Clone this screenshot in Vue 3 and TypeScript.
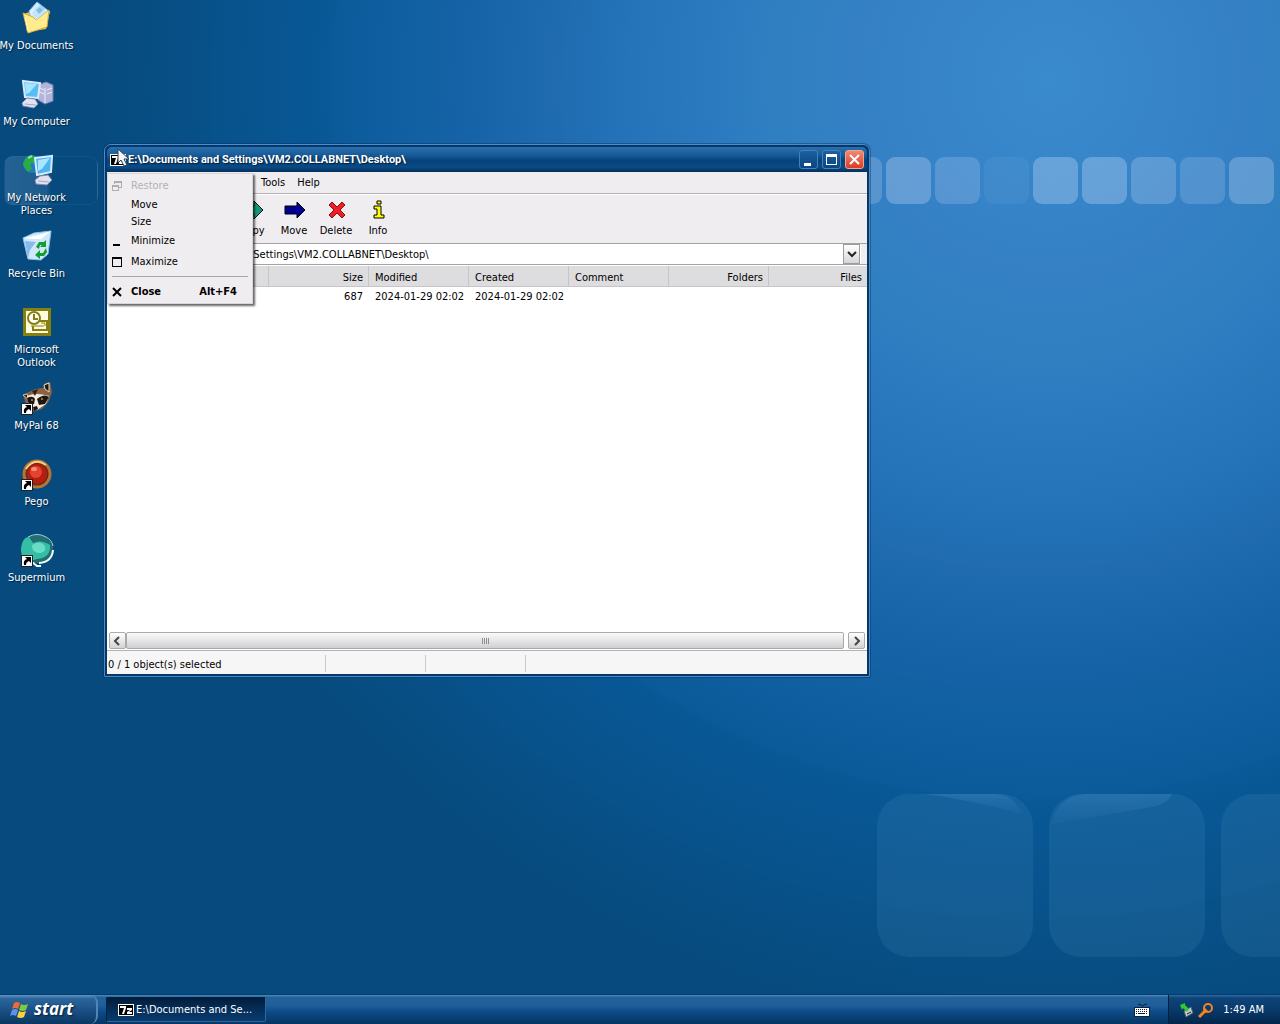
<script setup lang="ts">
import { ref } from 'vue'

interface Shortcut {
  id: string
  label: string
  linked?: boolean
}

interface FileRow {
  size: string
  modified: string
  created: string
}

interface SystemItem {
  label: string
  icon?: string
  disabled?: boolean
}

const shortcuts: Shortcut[] = [
  { id: 'documents', label: 'My Documents' },
  { id: 'computer', label: 'My Computer' },
  { id: 'network', label: 'My Network Places' },
  { id: 'recycle', label: 'Recycle Bin' },
  { id: 'outlook', label: 'Microsoft Outlook' },
  { id: 'mypal', label: 'MyPal 68', linked: true },
  { id: 'pego', label: 'Pego', linked: true },
  { id: 'supermium', label: 'Supermium', linked: true },
]

const path = 'E:\\Documents and Settings\\VM2.COLLABNET\\Desktop\\'
const address = ref(path)
const menus = ['Tools', 'Help']
const tools = ['Copy', 'Move', 'Delete', 'Info']
const rows: FileRow[] = [
  { size: '687', modified: '2024-01-29 02:02', created: '2024-01-29 02:02' },
]
const systemItems: SystemItem[] = [
  { label: 'Restore', icon: 'restore', disabled: true },
  { label: 'Move' },
  { label: 'Size' },
  { label: 'Minimize', icon: 'minimize' },
  { label: 'Maximize', icon: 'maximize' },
]
const smallTiles = [0.2, 0.27, 0.19, 0.06, 0.28, 0.28, 0.22, 0.17, 0.25]
const rings = [260, 350, 470, 590, 700, 820]
</script>

<template>
  <div class="screen">
    <svg class="wallpaper" viewBox="0 0 1280 1024" preserveAspectRatio="xMidYMid slice" aria-hidden="true">
      <defs>
        <radialGradient id="glow" gradientUnits="userSpaceOnUse" cx="1050" cy="80" r="1000">
          <stop offset="0" stop-color="#3a90ce" />
          <stop offset="0.2" stop-color="#3586c5" />
          <stop offset="0.42" stop-color="#2573b4" />
          <stop offset="0.58" stop-color="#1463a5" />
          <stop offset="0.74" stop-color="#075693" />
          <stop offset="0.95" stop-color="#074b7e" />
        </radialGradient>
        <linearGradient id="sheen" x1="0" y1="0" x2="0" y2="1">
          <stop offset="0" stop-color="#8fc0ff" stop-opacity="0.14" />
          <stop offset="1" stop-color="#8fc0ff" stop-opacity="0.03" />
        </linearGradient>
      </defs>
      <rect width="1280" height="1024" fill="url(#glow)" />
      <circle v-for="r in rings" :key="r" cx="1030" cy="100" :r="r" fill="#3b8fd8" fill-opacity="0.03" />
      <rect
        v-for="(opacity, i) in smallTiles"
        :key="i"
        :x="837 + i * 49"
        y="157"
        width="45"
        height="47"
        rx="9"
        fill="#e4ecff"
        :fill-opacity="opacity"
      />
      <rect
        v-for="i in 3"
        :key="'big' + i"
        :x="705 + i * 172"
        y="794"
        width="156"
        height="163"
        rx="32"
        fill="#6fb0d8"
        fill-opacity="0.12"
      />
      <path d="M925 794h70q18 0 27 20q-50-14-97-20z" fill="url(#sheen)" />
      <path d="M1051 824q8-30 36-30h85q-4 10-20 13z" fill="url(#sheen)" />
    </svg>

    <main class="desktop">
      <nav class="shortcuts" aria-label="Desktop">
        <a v-for="s in shortcuts" :key="s.id" href="#" class="shortcut" :class="{ hovered: s.id === 'network' }">
          <svg width="34" height="34" viewBox="0 0 34 34" aria-hidden="true">
            <g v-if="s.id === 'documents'">
              <path d="M4 13l8-3 3 3 15-3-4 18-19 3z" fill="#e8c64c" />
              <path d="M9 10L17 1l13 10-8 13-10-1z" fill="#d7efff" stroke="#83b6df" />
              <path d="M15 8l5-4 5 4-5 4zM15 15l4-3 5 4" fill="#8cc5ef" />
              <path d="M3 12l10 4 3 3 13-10-2 17-19 6z" fill="#ffec8e" stroke="#d7ac35" />
              <path d="M12 12l7-8 7 7-10 8z" fill="#c4e4fb" />
              <path d="M16 9l4-3 3 3-4 4z" fill="#7fbdec" />
              <path d="M5 16l3 14" stroke="#fffbd2" />
            </g>
            <g v-else-if="s.id === 'computer'">
              <path d="M18 8l8-3 7 3v16l-8 3-7-4z" fill="#b2b4da" stroke="#777caf" />
              <path d="M25 11v15M20 11l4 2M20 15l4 2M27 13l5-2M27 17l5-2" stroke="#eef" />
              <path d="M3 4l17 2-2 15-13-1z" fill="#58bdf5" stroke="#dceaff" stroke-width="2" />
              <path d="M5 6l12 1-8 9-3 1z" fill="#a5e6ff" />
              <path d="M7 21l8 1 3 5-4 4-11-2-1-3z" fill="#e2e2ef" stroke="#8188b2" />
              <path d="M5 27l11 1" stroke="#a4a7c7" />
            </g>
            <g v-else-if="s.id === 'network'">
              <circle cx="12" cy="11" r="9" fill="#237ac2" />
              <path d="M5 6l7-4 4 3-2 5-4 1 2 5-4 3-5-7z" fill="#29ac43" />
              <path d="M8 5l4-2" stroke="#8be491" stroke-width="2" />
              <path d="M15 5l17-2-1 16-14 3z" fill="#4bb5ef" stroke="#d9eaff" stroke-width="2" />
              <path d="M18 7l12-2-8 11-4 2z" fill="#a8e6ff" />
              <path d="M20 23l8-1 4 5-5 5-11-1-1-4z" fill="#e2e2ef" stroke="#8188b2" />
              <path d="M18 28l11 1" stroke="#a4a7c7" />
            </g>
            <g v-else-if="s.id === 'recycle'">
              <path d="M3 9l11-5 17-2-3 23-7 6-13-1z" fill="#cfe8fb" stroke="#8ebfe7" />
              <path d="M3 9l10 1 8 0 10-8-12 4z" fill="#fff" />
              <path d="M5 12l11 1-6 8-2 8z" fill="#86bbea" />
              <path d="M16 18l3-5h5l2-2v7h-6l2-2h-2l-1 4zM26 19l1 4-3 4h-4v3l-5-4 5-5v3h3z" fill="#11a02b" />
            </g>
            <g v-else-if="s.id === 'outlook'">
              <rect x="3" y="3" width="28" height="28" fill="#86800f" />
              <rect x="6" y="6" width="22" height="22" fill="#fffbe0" />
              <circle cx="14" cy="13" r="6" fill="#fff" stroke="#86800f" stroke-width="2" />
              <path d="M14 9v5h4M19 16h8v9H13v-4" fill="none" stroke="#86800f" stroke-width="2" />
              <path d="M11 21h13M21 18h4v3" stroke="#86800f" fill="none" />
            </g>
            <g v-else-if="s.id === 'mypal'">
              <path d="M3 14l6-3 6-3 8-1 2-5 5-1 2 10-3 9-7 8-10 3-6-8z" fill="#8a6243" />
              <path d="M24 4l5-2v9l-4-3z" fill="#1e1715" stroke="#e8d8bc" />
              <path d="M3 14l4-1 2 6z" fill="#241a16" stroke="#d9c8aa" />
              <path d="M7 15q9-4 22 0l-3 8-9 6-8-3z" fill="#f5eddd" />
              <path d="M7 17q6-3 8 1l-1 5-5 1zM17 18q7-6 12-2l-4 7-6 1z" fill="#1b1716" />
              <circle cx="12" cy="19" r="1" fill="#d9863b" />
              <circle cx="22" cy="18" r="1" fill="#d9863b" />
              <path d="M13 26l4-1 1 3-4 2z" fill="#191514" />
              <path d="M12 10l3 5 3-7" fill="#30231c" />
            </g>
            <g v-else-if="s.id === 'pego'">
              <circle cx="17" cy="17" r="14" fill="#6c2c17" />
              <circle cx="17" cy="17" r="13" fill="none" stroke="#b8743a" stroke-width="3" />
              <path d="M6 12q8-12 20-4" fill="none" stroke="#f5cf83" stroke-width="2" />
              <circle cx="17" cy="17" r="10" fill="#b91d0e" />
              <circle cx="16" cy="15" r="6" fill="#e2452f" />
              <ellipse cx="14" cy="12" rx="3" ry="2" fill="#f58c74" />
            </g>
            <g v-else>
              <ellipse cx="17" cy="16" rx="16" ry="14" fill="#226e70" />
              <path d="M8 4q9-5 18 0 6 3 7 9" fill="none" stroke="#9fd5d2" />
              <path d="M1 17Q2 4 9 4q2 3 4 6 8-4 17 2 1 13-13 14-10 4-15-2z" fill="#35bda5" />
              <path d="M12 12q8-5 12 0 4 5-3 8-9 1-9-8z" fill="#68dcc6" />
              <path d="M33 17q-1 12-14 13M12 29l5 4h4" fill="none" stroke="#f2fffc" stroke-width="2" />
            </g>
            <g v-if="s.linked">
              <path d="M1 22h12v12H1z" fill="#222" />
              <path d="M2 23h10v10H2z" fill="#fff" />
              <path d="M4 32q-1-5 3-6l-2-2h6v6l-2-2q-3 1-3 4z" fill="#000" />
            </g>
          </svg>
          <span>{{ s.label }}</span>
        </a>
      </nav>

      <section class="window" aria-label="File manager">
        <header class="titlebar">
          <svg class="seven" width="16" height="12" viewBox="0 0 16 12" aria-hidden="true">
            <path d="M0 0h16v12H0z" fill="#fff" />
            <path d="M1 1h14v10H1z" fill="#000" />
            <path d="M2 2h6v2L6 10H4l2-6H2zM9 4h5v2l-3 2h3v2H9V8l3-2H9z" fill="#fff" />
          </svg>
          <h1>{{ path }}</h1>
          <div class="controls">
            <button type="button" aria-label="Minimize">
              <svg width="17" height="17" viewBox="0 0 17 17"><path d="M4 12h7v3H4z" fill="#fff" /></svg>
            </button>
            <button type="button" aria-label="Maximize">
              <svg width="17" height="17" viewBox="0 0 17 17"><path d="M3 3h11v11H3zM4 6v7h9V6z" fill="#fff" fill-rule="evenodd" /></svg>
            </button>
            <button type="button" class="close" aria-label="Close">
              <svg width="17" height="17" viewBox="0 0 17 17"><path d="M4 4l9 9M13 4l-9 9" stroke="#fff" stroke-width="2" /></svg>
            </button>
          </div>
        </header>

        <div class="client">
          <nav class="menubar">
            <button v-for="m in menus" :key="m" type="button">{{ m }}</button>
          </nav>

          <div class="toolbar">
            <button v-for="t in tools" :key="t" type="button">
              <svg width="24" height="22" viewBox="0 0 24 22" aria-hidden="true">
                <path v-if="t === 'Copy'" d="M2 7h12V2l9 9-9 9v-5H2z" fill="#16967c" stroke="#111" />
                <path v-else-if="t === 'Move'" d="M3 7h12V3l8 8-8 8v-4H3z" fill="#000093" stroke="#000" />
                <path v-else-if="t === 'Delete'" d="M5 6l3-3 5 5 5-5 3 3-5 5 5 5-3 3-5-5-5 5-3-3 5-5z" fill="#f11d23" stroke="#7c1416" />
                <path v-else d="M11 2h4v3h-4zM8 7h7v9h3v3H8v-3h3v-6H8z" fill="#ff0" stroke="#000" />
              </svg>
              <span>{{ t }}</span>
            </button>
          </div>

          <div class="address">
            <label class="folder" for="address" aria-label="Address">
              <svg width="18" height="16" viewBox="0 0 18 16"><path d="M1 3h6l2 2h8v10H1z" fill="#ffe27a" stroke="#a88420" /></svg>
            </label>
            <select id="address" v-model="address">
              <option>{{ path }}</option>
            </select>
            <span class="arrow" aria-hidden="true">
              <svg width="15" height="18" viewBox="0 0 15 18"><path d="M4 7l4 4 4-4" fill="none" stroke="#222" stroke-width="2" /></svg>
            </span>
          </div>

          <div class="list">
            <table>
              <thead>
                <tr>
                  <th class="name"></th>
                  <th class="num">Size</th>
                  <th>Modified</th>
                  <th>Created</th>
                  <th>Comment</th>
                  <th class="num">Folders</th>
                  <th class="num">Files</th>
                </tr>
              </thead>
              <tbody>
                <tr v-for="(r, i) in rows" :key="i">
                  <td></td>
                  <td class="num">{{ r.size }}</td>
                  <td>{{ r.modified }}</td>
                  <td>{{ r.created }}</td>
                  <td></td>
                  <td></td>
                  <td></td>
                </tr>
              </tbody>
            </table>
          </div>

          <div class="scrollbar">
            <button type="button" aria-label="Scroll left">
              <svg width="15" height="16" viewBox="0 0 15 16"><path d="M9 4L5 8l4 4" fill="none" stroke="#444" stroke-width="2" /></svg>
            </button>
            <div class="thumb"><i></i><i></i><i></i><i></i></div>
            <button type="button" class="next" aria-label="Scroll right">
              <svg width="15" height="16" viewBox="0 0 15 16"><path d="M6 4l4 4-4 4" fill="none" stroke="#444" stroke-width="2" /></svg>
            </button>
          </div>

          <footer class="status">
            <span class="count">0 / 1 object(s) selected</span>
            <span></span>
            <span></span>
            <span class="rest"></span>
          </footer>
        </div>

        <div class="sysmenu" role="menu">
          <button
            v-for="item in systemItems"
            :key="item.label"
            type="button"
            role="menuitem"
            :class="{ plain: !item.icon }"
            :disabled="item.disabled"
          >
            <svg width="12" height="12" viewBox="0 0 12 12" aria-hidden="true">
              <path
                v-if="item.icon === 'restore'"
                d="M3 1h8v7H8V7h2V3H4v1H3zM1 5h7v6H1zM2 7v3h5V7z"
                fill="#b0adb1"
                fill-rule="evenodd"
              />
              <path v-else-if="item.icon === 'minimize'" d="M2 9h7v2H2z" fill="#000" />
              <path v-else-if="item.icon === 'maximize'" d="M1 1h10v10H1zM2 3v7h8V3z" fill="#000" fill-rule="evenodd" />
            </svg>
            <span>{{ item.label }}</span>
          </button>
          <hr />
          <button type="button" role="menuitem" class="strong">
            <svg width="12" height="12" viewBox="0 0 12 12" aria-hidden="true"><path d="M2 2l8 8M10 2l-8 8" stroke="#000" stroke-width="2" /></svg>
            <span>Close</span>
            <kbd>Alt+F4</kbd>
          </button>
        </div>

        <svg class="pointer" width="14" height="20" viewBox="0 0 14 20" aria-hidden="true">
          <path d="M1 1v14l3-3 3 6 3-1-3-6h5z" fill="#f4f4f4" stroke="#34404c" />
        </svg>
      </section>
    </main>

    <footer class="taskbar">
      <button type="button" class="start">
        <svg width="20" height="20" viewBox="0 0 20 20" aria-hidden="true">
          <path d="M4 3q3-2 6 0L8 9q-3-2-6 0z" fill="#ee6a38" />
          <path d="M11 4q3 2 7 0l-2 6q-3 2-7 0z" fill="#83c93d" />
          <path d="M2 10q3-2 6 0l-2 6q-3-2-6 0z" fill="#5d93e8" />
          <path d="M9 11q3 2 7 0l-2 6q-3 2-7 0z" fill="#fbd23c" />
        </svg>
        <span>start</span>
      </button>
      <button type="button" class="task">
        <svg width="16" height="12" viewBox="0 0 16 12" aria-hidden="true">
          <path d="M0 0h16v12H0z" fill="#fff" />
          <path d="M1 1h14v10H1z" fill="#000" />
          <path d="M2 2h6v2L6 10H4l2-6H2zM9 4h5v2l-3 2h3v2H9V8l3-2H9z" fill="#fff" />
        </svg>
        <span>E:\Documents and Se...</span>
      </button>
      <svg class="keyboard" width="16" height="16" viewBox="0 0 16 16" aria-label="Keyboard">
        <path d="M4 3q2-2 3 0t3 0 3 0" fill="none" stroke="#0b2037" />
        <path d="M0 5h16v10H0z" fill="#0a2540" />
        <path d="M1 6h14v8H1z" fill="#fff" />
        <path d="M2 7h1v1H2zM4 7h1v1H4zM6 7h1v1H6zM8 7h1v1H8zM10 7h1v1h-1zM12 7h1v1h-1zM2 9h1v1H2zM4 9h1v1H4zM6 9h1v1H6zM8 9h1v1H8zM10 9h1v1h-1zM12 9h1v1h-1zM2 11h1v1H2zM4 11h7v1H4zM12 11h1v1h-1z" fill="#123" />
      </svg>
      <div class="tray">
        <svg width="16" height="16" viewBox="0 0 16 16" aria-hidden="true">
          <path d="M5 9l7-4 2 6-7 4z" fill="#bfc8cc" stroke="#4f6069" />
          <path d="M8 12l4-2" stroke="#222" />
          <path d="M1 3l5-2v2l4 4-2 3-4-4-1 2z" fill="#2ecb33" />
        </svg>
        <svg width="16" height="16" viewBox="0 0 16 16" aria-hidden="true">
          <circle cx="10" cy="6" r="4" fill="none" stroke="#f58220" stroke-width="2" />
          <path d="M7 9l-6 6M6 7l3 3" stroke="#f58220" stroke-width="3" />
        </svg>
        <time>1:49 AM</time>
      </div>
    </footer>
  </div>
</template>

<style>
body {
  margin: 0;
}
</style>

<style scoped>
.screen {
  position: relative;
  display: flex;
  flex-direction: column;
  min-height: 100vh;
  overflow: hidden;
  background: #074b7e;
  color: #000;
  font: 11px/13px 'DejaVu Sans Condensed', 'DejaVu Sans', sans-serif;
}
.screen * {
  box-sizing: border-box;
}
button,
select {
  margin: 0;
  padding: 0;
  border: 0;
  background: none;
  color: inherit;
  font: inherit;
}
svg {
  display: block;
  flex: none;
}
.wallpaper {
  position: absolute;
  inset: 0;
  width: 100%;
  height: 100%;
}
.desktop {
  position: relative;
  flex: 1;
  min-height: 700px;
}
.shortcuts {
  display: flex;
  flex-direction: column;
  width: 73px;
  padding-top: 1px;
}
.shortcut {
  display: flex;
  flex-direction: column;
  align-items: center;
  gap: 4px;
  height: 76px;
  color: #fff;
  text-align: center;
  text-decoration: none;
  text-shadow: 1px 1px 1px #021f3b;
  white-space: nowrap;
}
.shortcut:nth-child(3) span,
.shortcut:nth-child(5) span {
  white-space: normal;
}
.hovered {
  position: relative;
}
.hovered::before {
  content: '';
  position: absolute;
  left: 4px;
  top: 3px;
  width: 92px;
  height: 47px;
  border: 1px solid rgba(110, 160, 210, 0.1);
  border-radius: 9px;
  background: linear-gradient(90deg, rgba(130, 170, 215, 0.25), rgba(130, 170, 215, 0.18) 45%, transparent 50%);
}
.hovered > * {
  position: relative;
}
.window {
  position: absolute;
  left: 104px;
  top: 144px;
  width: calc(60% - 2px);
  min-width: 640px;
  padding: 2px;
  border: 1px solid #4d8bc4;
  border-radius: 7px 7px 1px 1px;
  background: #06376a;
  box-shadow: 0 0 0 1px rgba(4, 45, 90, 0.4);
}
.titlebar {
  display: flex;
  align-items: center;
  height: 25px;
  padding: 0 3px;
  border-radius: 5px 5px 0 0;
  background: linear-gradient(#2a70ae, #1a5c9a 30%, #06427a 55%, #0a4b86 80%, #03305c);
  color: #fff;
}
.titlebar h1 {
  flex: 1;
  margin: 0 0 0 2px;
  font: bold 11px/13px Roboto, sans-serif;
  text-shadow: 1px 1px 1px #021c38;
  white-space: nowrap;
}
.controls {
  display: flex;
  gap: 4px;
}
.controls button {
  width: 19px;
  height: 19px;
  border: 1px solid #3f83bc;
  border-radius: 3px;
  background: linear-gradient(#1d5f9e, #0a4580);
}
.controls .close {
  border-color: #f3a293;
  background: linear-gradient(#f08a72, #dc3c24);
}
.client {
  background: #f0edf0;
}
.menubar {
  display: flex;
  height: 22px;
  padding-left: 148px;
  border-bottom: 1px solid #b3b1b4;
}
.menubar button {
  height: 20px;
  padding: 0 6px;
}
.toolbar {
  display: flex;
  height: 49px;
  padding-left: 124px;
  border-top: 1px solid #fff;
}
.toolbar button {
  display: flex;
  flex-direction: column;
  align-items: center;
  width: 42px;
  padding-top: 4px;
  gap: 3px;
}
.address {
  position: relative;
  display: flex;
  align-items: center;
  height: 22px;
  padding-right: 6px;
  border-top: 1px solid #a3a3a5;
  border-bottom: 1px solid #a3a3a5;
}
.folder {
  padding: 0 4px;
}
.address select {
  flex: 1;
  height: 20px;
  padding: 1px 0 0 26px;
  background: #fff;
  appearance: none;
  outline: 0;
}
.arrow {
  position: absolute;
  right: 7px;
  top: 0;
  border: 1px solid #9b9b9e;
  background: linear-gradient(#fff, #d6d6d8);
  pointer-events: none;
}
.list {
  min-height: 367px;
  border-top: 1px solid #fff;
  background: #fff;
}
table {
  width: 100%;
  border-collapse: separate;
  border-spacing: 0;
  table-layout: fixed;
}
th,
td {
  width: 100px;
  height: 21px;
  padding: 2px 6px 0;
  font-weight: normal;
  text-align: left;
  white-space: nowrap;
}
th {
  border-right: 1px solid #c6c6c8;
  border-bottom: 1px solid #c6c6c8;
  background: #dddcde;
}
th.name {
  width: 162px;
}
td {
  height: 18px;
  padding: 0 6px;
}
th:last-child {
  width: auto;
  border-right: 0;
  padding-right: 5px;
}
th.num {
  padding-right: 5px;
}
.num {
  text-align: right;
}
.scrollbar {
  display: flex;
  height: 19px;
  padding: 0 2px 1px;
  background: #fff;
  border-bottom: 1px solid #b4b2b5;
}
.scrollbar button {
  width: 17px;
  border: 1px solid #aaa;
  border-radius: 2px;
  background: linear-gradient(#fff, #d4d3d5);
}
.scrollbar .next {
  margin-left: 4px;
}
.thumb {
  display: flex;
  flex: 1;
  align-items: center;
  justify-content: center;
  gap: 1px;
  border: 1px solid #a9a8aa;
  border-radius: 2px;
  background: linear-gradient(#fbfbfb, #e6e5e7 50%, #cfced0);
}
.thumb i {
  width: 1px;
  height: 6px;
  background: #8e8e90;
}
.status {
  display: flex;
  align-items: flex-end;
  height: 23px;
  padding-bottom: 2px;
  background: #f7f6f7;
}
.status span {
  width: 100px;
  height: 17px;
  padding: 3px 1px 0;
  border-right: 1px solid #cbcacb;
}
.status .count {
  width: 219px;
}
.status .rest {
  flex: 1;
  border: 0;
}
.sysmenu {
  position: absolute;
  left: 2px;
  top: 28px;
  width: 146px;
  padding: 1px;
  border: 1px solid #d8d6d9;
  background: #f0edf0;
  box-shadow: 2px 2px 2px rgba(0, 0, 0, 0.6);
}
.sysmenu button {
  display: flex;
  align-items: center;
  gap: 8px;
  width: 100%;
  height: 21px;
  padding: 0 14px 0 2px;
}
.sysmenu .plain {
  height: 17px;
}
.sysmenu button:disabled {
  color: #b4b1b5;
}
.sysmenu hr {
  height: 1px;
  margin: 4px 3px;
  border: 0;
  background: #a9a7aa;
}
.sysmenu .strong {
  font-weight: bold;
}
.sysmenu kbd {
  margin-left: auto;
  font: inherit;
}
.pointer {
  position: absolute;
  left: 12px;
  top: 3px;
}
.taskbar {
  position: relative;
  display: flex;
  align-items: center;
  height: 30px;
  border-top: 1px solid #0a3c6b;
  background: linear-gradient(#4a8cc4, #236199 8%, #1f5f9b 35%, #0c4a84 60%, #063563);
  color: #fff;
}
.start {
  display: flex;
  align-items: center;
  gap: 4px;
  width: 98px;
  height: 29px;
  padding-left: 10px;
  border-right: 2px solid #4f86b8;
  border-radius: 0 8px 8px 0;
  background: linear-gradient(#5f96c6, #2d669b 12%, #1c5288 50%, #0a3762);
  font: italic bold 17px/20px 'Open Sans', sans-serif;
  text-shadow: 1px 1px 2px #021c38;
}
.start span {
  padding-bottom: 2px;
}
.task {
  display: flex;
  align-items: center;
  gap: 2px;
  width: 160px;
  height: 25px;
  margin-left: 8px;
  padding-left: 11px;
  border: 1px solid #02203f;
  border-right-color: #2a68a3;
  border-bottom-color: #2a68a3;
  border-radius: 2px;
  background: linear-gradient(#021d3b, #052e59 50%, #0a3b6d);
  white-space: nowrap;
}
.keyboard {
  margin-left: auto;
}
.tray {
  display: flex;
  align-items: center;
  gap: 3px;
  height: 29px;
  margin-left: 18px;
  padding: 0 16px 0 10px;
  border-left: 1px solid #03203e;
  background: linear-gradient(#2f6ca5, #0e4479 10%, #083a6c 50%, #03264b);
}
.tray time {
  margin-left: 6px;
}
</style>
